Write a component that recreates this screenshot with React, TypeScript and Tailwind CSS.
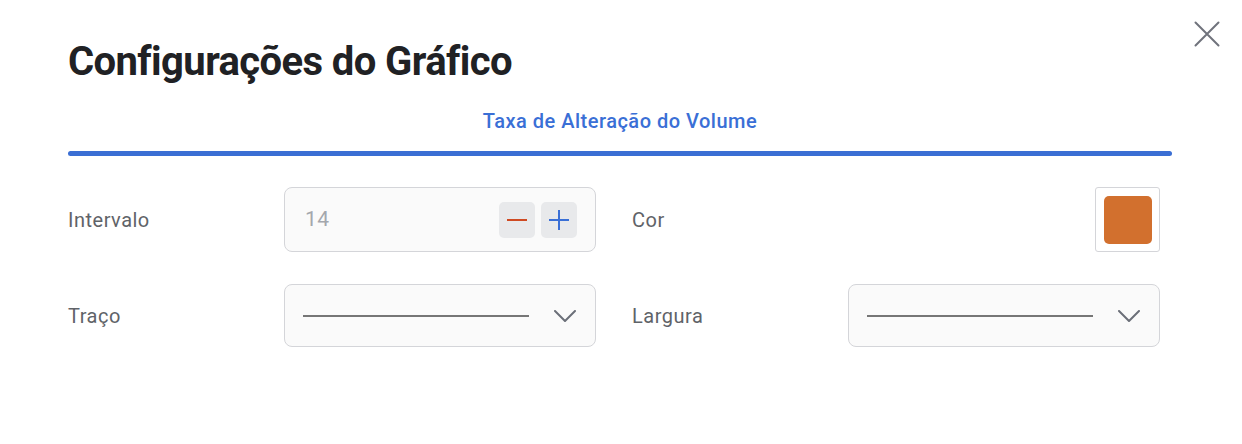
import React from 'react'

const ChevronDown = () => (
  <svg width="22" height="12" viewBox="0 0 22 12" fill="none">
    <path d="M1 1 L11 11 L21 1" stroke="#6b6f78" strokeWidth="2" strokeLinecap="round" strokeLinejoin="round" />
  </svg>
)

const LineSelect = () => (
  <div className="flex h-[63px] w-[312px] items-center rounded-lg border border-[#d4d5d9] bg-[#fafafa] pl-[18px] pr-[19px]">
    <div className="h-[2px] w-[226px] bg-[#767676]" />
    <div className="ml-auto flex items-center">
      <ChevronDown />
    </div>
  </div>
)

const Label = ({ children }: { children: React.ReactNode }) => (
  <div className="flex w-[216px] items-center text-[20px] tracking-[0.5px] text-[#5f6368]">{children}</div>
)

export default function App() {
  return (
    <div className="relative h-[444px] w-[1242px] bg-white font-['Roboto',sans-serif]">
      <button className="absolute right-[22px] top-[21px] text-[#70737c]">
        <svg width="26" height="26" viewBox="0 0 26 26" fill="none">
          <path d="M1.5 1.5 L24.5 24.5 M24.5 1.5 L1.5 24.5" stroke="currentColor" strokeWidth="2" strokeLinecap="round" />
        </svg>
      </button>

      <div className="pl-[68px] pr-[70px] pt-[39px]">
        <h1 className="text-[40px] font-bold leading-[46px] tracking-[-0.6px] text-[#202124]">Configurações do Gráfico</h1>

        {/* Tab */}
        <div className="mt-[24px] flex flex-col items-center">
          <span className="text-[20px] font-medium leading-[24px] tracking-[0.5px] text-[#3a6fd6]">Taxa de Alteração do Volume</span>
          <div className="mt-[18px] h-[5px] w-full rounded-full bg-[#3b6fd4]" />
        </div>

        {/* Form */}
        <div className="mt-[31px] flex flex-col gap-[32px]">
          <div className="flex">
            <Label>Intervalo</Label>
            <div className="flex h-[65px] w-[312px] items-center rounded-lg border border-[#d4d5d9] bg-[#fafafa] pl-[20px] pr-[18px]">
              <span className="text-[21px] tracking-[0.5px] text-[#a4a7ad]">14</span>
              <div className="ml-auto flex gap-[6px]">
                <button className="flex h-[36px] w-[36px] items-center justify-center rounded-[5px] bg-[#e8e9eb]">
                  <span className="block h-[2px] w-[20px] bg-[#cf4a22]" />
                </button>
                <button className="flex h-[36px] w-[36px] items-center justify-center rounded-[5px] bg-[#e8e9eb]">
                  <svg width="20" height="20" viewBox="0 0 20 20">
                    <path d="M10 0 V20 M0 10 H20" stroke="#3a6fd6" strokeWidth="2" />
                  </svg>
                </button>
              </div>
            </div>
            <div className="ml-[36px] flex">
              <Label>Cor</Label>
              <div className="flex w-[312px] justify-end">
                <div className="flex h-[65px] w-[65px] items-center justify-center rounded-[3px] border border-[#d4d5d9] bg-white">
                  <div className="h-[48px] w-[48px] rounded-[5px] bg-[#d2702e]" />
                </div>
              </div>
            </div>
          </div>

          <div className="flex">
            <Label>Traço</Label>
            <LineSelect />
            <div className="ml-[36px] flex">
              <Label>Largura</Label>
              <LineSelect />
            </div>
          </div>
        </div>
      </div>
    </div>
  )
}
